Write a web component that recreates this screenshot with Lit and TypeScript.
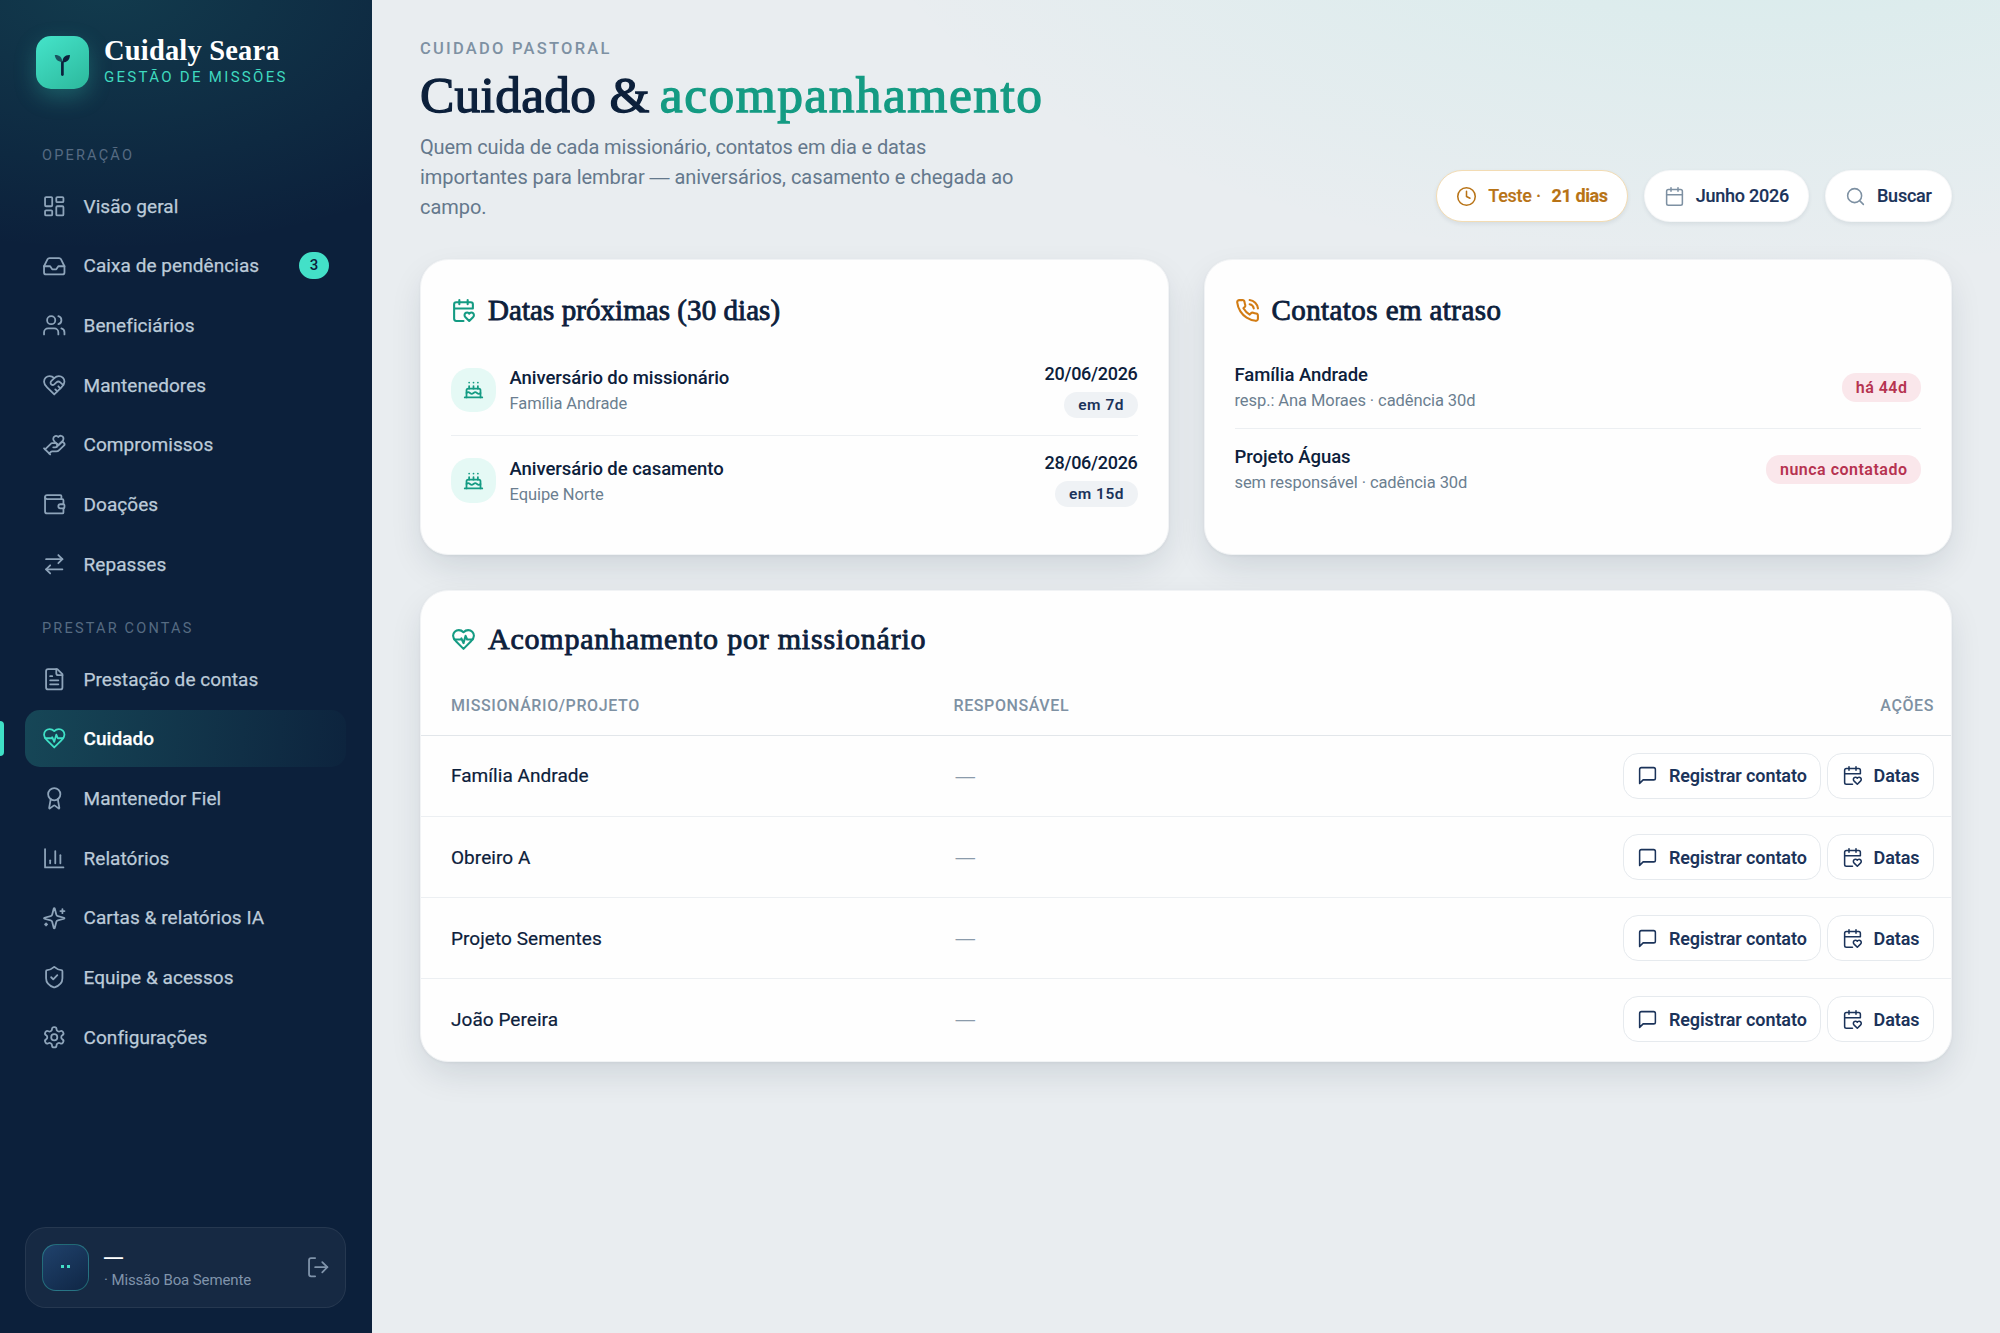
import { LitElement, html, css, svg } from "lit";
import { customElement, property } from "lit/decorators.js";
import { classMap } from "lit/directives/class-map.js";

const HEART = svg`<path d="M19 14c1.49-1.46 3-3.21 3-5.5A5.5 5.5 0 0 0 16.5 3c-1.76 0-3 .5-4.5 2-1.5-1.5-2.74-2-4.5-2A5.5 5.5 0 0 0 2 8.5c0 2.3 1.5 4.05 3 5.5l7 7Z"/>`;

const ICONS: Record<string, unknown> = {
  dashboard: svg`<rect x="3" y="3" width="7" height="9" rx="1"/><rect x="14" y="3" width="7" height="5" rx="1"/><rect x="14" y="12" width="7" height="9" rx="1"/><rect x="3" y="16" width="7" height="5" rx="1"/>`,
  inbox: svg`<path d="M22 12h-6l-2 3h-4l-2-3H2"/><path d="M5.45 5.11 2 12v6a2 2 0 0 0 2 2h16a2 2 0 0 0 2-2v-6l-3.45-6.89A2 2 0 0 0 16.76 4H7.24a2 2 0 0 0-1.79 1.11z"/>`,
  users: svg`<path d="M16 21v-2a4 4 0 0 0-4-4H6a4 4 0 0 0-4 4v2"/><circle cx="9" cy="7" r="4"/><path d="M22 21v-2a4 4 0 0 0-3-3.87"/><path d="M16 3.13a4 4 0 0 1 0 7.75"/>`,
  handshake: svg`${HEART}<path d="M12 5 9.04 7.96a2.17 2.17 0 0 0 0 3.08c.82.82 2.13.85 3 .07l2.07-1.9a2.82 2.82 0 0 1 3.79 0l2.96 2.66"/><path d="m18 15-2-2"/><path d="m15 18-2-2"/>`,
  handHeart: svg`<path d="M11 14h2a2 2 0 1 0 0-4h-3c-.6 0-1.1.2-1.4.6L3 16"/><path d="m7 20 1.6-1.4c.3-.4.8-.6 1.4-.6h4c1.1 0 2.1-.4 2.8-1.2l4.6-4.4a2 2 0 0 0-2.75-2.91l-4.2 3.9"/><path d="m2 15 6 6"/><path d="M19.5 8.5c.7-.7 1.5-1.6 1.5-2.7A2.73 2.73 0 0 0 16 4a2.78 2.78 0 0 0-5 1.8c0 1.2.8 2 1.5 2.8L16 12Z"/>`,
  wallet: svg`<path d="M19 7V4a1 1 0 0 0-1-1H5a2 2 0 0 0 0 4h15a1 1 0 0 1 1 1v4h-3a2 2 0 0 0 0 4h3a1 1 0 0 0 1-1v-2a1 1 0 0 0-1-1"/><path d="M3 5v14a2 2 0 0 0 2 2h15a1 1 0 0 0 1-1v-4"/>`,
  swap: svg`<path d="m16 3 4 4-4 4"/><path d="M20 7H4"/><path d="m8 21-4-4 4-4"/><path d="M4 17h16"/>`,
  file: svg`<path d="M15 2H6a2 2 0 0 0-2 2v16a2 2 0 0 0 2 2h12a2 2 0 0 0 2-2V7Z"/><path d="M14 2v4a2 2 0 0 0 2 2h4"/><path d="M10 9H8"/><path d="M16 13H8"/><path d="M16 17H8"/>`,
  pulse: svg`${HEART}<path d="M3.22 12H9.5l.5-1 2 4.5 2-7 1.5 3.5h5.27"/>`,
  award: svg`<path d="m15.477 12.89 1.515 8.526a.5.5 0 0 1-.81.47l-3.58-2.687a1 1 0 0 0-1.197 0l-3.586 2.686a.5.5 0 0 1-.81-.469l1.514-8.526"/><circle cx="12" cy="8" r="6"/>`,
  chart: svg`<path d="M3 3v18h18"/><path d="M18 17V9"/><path d="M13 17V5"/><path d="M8 17v-3"/>`,
  sparkles: svg`<path d="M9.937 15.5A2 2 0 0 0 8.5 14.063l-6.135-1.582a.5.5 0 0 1 0-.962L8.5 9.936A2 2 0 0 0 9.937 8.5l1.582-6.135a.5.5 0 0 1 .963 0L14.063 8.5A2 2 0 0 0 15.5 9.937l6.135 1.581a.5.5 0 0 1 0 .964L15.5 14.063a2 2 0 0 0-1.437 1.437l-1.582 6.135a.5.5 0 0 1-.963 0z"/><path d="M20 3v4"/><path d="M22 5h-4"/><path d="M4 17v2"/><path d="M5 18H3"/>`,
  shield: svg`<path d="M20 13c0 5-3.5 7.5-7.66 8.95a1 1 0 0 1-.67-.01C7.5 20.5 4 18 4 13V6a1 1 0 0 1 1-1c2 0 4.5-1.2 6.24-2.72a1.17 1.17 0 0 1 1.52 0C14.51 3.81 17 5 19 5a1 1 0 0 1 1 1z"/><path d="m9 12 2 2 4-4"/>`,
  gear: svg`<path d="M12.22 2h-.44a2 2 0 0 0-2 2v.18a2 2 0 0 1-1 1.73l-.43.25a2 2 0 0 1-2 0l-.15-.08a2 2 0 0 0-2.73.73l-.22.38a2 2 0 0 0 .73 2.73l.15.1a2 2 0 0 1 1 1.72v.51a2 2 0 0 1-1 1.74l-.15.09a2 2 0 0 0-.73 2.73l.22.38a2 2 0 0 0 2.73.73l.15-.08a2 2 0 0 1 2 0l.43.25a2 2 0 0 1 1 1.73V20a2 2 0 0 0 2 2h.44a2 2 0 0 0 2-2v-.18a2 2 0 0 1 1-1.73l.43-.25a2 2 0 0 1 2 0l.15.08a2 2 0 0 0 2.73-.73l.22-.39a2 2 0 0 0-.73-2.73l-.15-.08a2 2 0 0 1-1-1.74v-.5a2 2 0 0 1 1-1.74l.15-.09a2 2 0 0 0 .73-2.73l-.22-.38a2 2 0 0 0-2.73-.73l-.15.08a2 2 0 0 1-2 0l-.43-.25a2 2 0 0 1-1-1.73V4a2 2 0 0 0-2-2z"/><circle cx="12" cy="12" r="3"/>`,
  logout: svg`<path d="M9 21H5a2 2 0 0 1-2-2V5a2 2 0 0 1 2-2h4"/><path d="m16 17 5-5-5-5"/><path d="M21 12H9"/>`,
  clock: svg`<circle cx="12" cy="12" r="10"/><path d="M12 6v6l4 2"/>`,
  calendar: svg`<path d="M8 2v4"/><path d="M16 2v4"/><rect x="3" y="4" width="18" height="18" rx="2"/><path d="M3 10h18"/>`,
  search: svg`<circle cx="11" cy="11" r="8"/><path d="m21 21-4.3-4.3"/>`,
  calendarHeart: svg`<path d="M3 10h18V6a2 2 0 0 0-2-2H5a2 2 0 0 0-2 2v14a2 2 0 0 0 2 2h7"/><path d="M8 2v4"/><path d="M16 2v4"/><path d="M21.29 14.7a2.43 2.43 0 0 0-2.65-.52c-.3.12-.57.3-.8.53l-.34.34-.35-.34a2.43 2.43 0 0 0-2.65-.53c-.3.12-.56.3-.79.53-.95.94-1 2.53.2 3.74L17.5 22l3.6-3.55c1.2-1.21 1.14-2.8.19-3.74Z"/>`,
  phone: svg`<path d="M22 16.92v3a2 2 0 0 1-2.18 2 19.79 19.79 0 0 1-8.63-3.07 19.5 19.5 0 0 1-6-6 19.79 19.79 0 0 1-3.07-8.67A2 2 0 0 1 4.11 2h3a2 2 0 0 1 2 1.72 12.84 12.84 0 0 0 .7 2.81 2 2 0 0 1-.45 2.11L8.09 9.91a16 16 0 0 0 6 6l1.27-1.27a2 2 0 0 1 2.11-.45 12.84 12.84 0 0 0 2.81.7A2 2 0 0 1 22 16.92z"/><path d="M14.05 2a9 9 0 0 1 8 7.94"/><path d="M14.05 6A5 5 0 0 1 18 10"/>`,
  message: svg`<path d="M21 15a2 2 0 0 1-2 2H7l-4 4V5a2 2 0 0 1 2-2h14a2 2 0 0 1 2 2z"/>`,
  cake: svg`<path d="M20 21v-8a2 2 0 0 0-2-2H6a2 2 0 0 0-2 2v8"/><path d="M4 16s.5-1 2-1 2.5 2 4 2 2.5-2 4-2 2.5 2 4 2 2-1 2-1"/><path d="M2 21h20"/><path d="M7 8v3"/><path d="M12 8v3"/><path d="M17 8v3"/><path d="M7 4h.01"/><path d="M12 4h.01"/><path d="M17 4h.01"/>`,
};

@customElement("ui-icon")
class UiIcon extends LitElement {
  @property() name = "";
  @property({ type: Number }) size = 25;
  @property({ type: Number }) weight = 1.75;

  static styles = css`
    :host { display: inline-flex; flex: none; }
    .glyph { display: block; fill: none; stroke: currentColor; stroke-linecap: round; stroke-linejoin: round; }
  `;

  render() {
    return html`<svg class="glyph" width=${this.size} height=${this.size} viewBox="0 0 24 24" stroke-width=${this.weight}>${ICONS[this.name]}</svg>`;
  }
}

interface NavItem { icon: string; label: string; count?: number; active?: boolean; }

const NAV: { title: string; items: NavItem[] }[] = [
  {
    title: "OPERAÇÃO",
    items: [
      { icon: "dashboard", label: "Visão geral" },
      { icon: "inbox", label: "Caixa de pendências", count: 3 },
      { icon: "users", label: "Beneficiários" },
      { icon: "handshake", label: "Mantenedores" },
      { icon: "handHeart", label: "Compromissos" },
      { icon: "wallet", label: "Doações" },
      { icon: "swap", label: "Repasses" },
    ],
  },
  {
    title: "PRESTAR CONTAS",
    items: [
      { icon: "file", label: "Prestação de contas" },
      { icon: "pulse", label: "Cuidado", active: true },
      { icon: "award", label: "Mantenedor Fiel" },
      { icon: "chart", label: "Relatórios" },
      { icon: "sparkles", label: "Cartas & relatórios IA" },
      { icon: "shield", label: "Equipe & acessos" },
      { icon: "gear", label: "Configurações" },
    ],
  },
];

@customElement("side-bar")
class SideBar extends LitElement {
  static styles = css`
    :host {
      display: flex; flex-direction: column; box-sizing: border-box; flex: none;
      width: 372px; height: 1333px; padding: 36px 26px 25px 25px;
      background:
        radial-gradient(480px 260px at 28% -10px, rgba(47, 190, 165, 0.17), transparent 100%),
        #0c203b;
    }
    .brand { display: flex; align-items: center; gap: 15px; height: 53px; padding-left: 11px; }
    .logo {
      display: flex; width: 53px; height: 53px; border-radius: 15px;
      background: linear-gradient(145deg, #45e4ca, #2cb89c);
      box-shadow: 0 8px 22px rgba(63, 224, 198, 0.26);
    }
    .names { display: flex; flex-direction: column; margin-top: -4px; }
    .product {
      font: 700 28.5px/30px "Liberation Serif", serif; letter-spacing: 0.18px; color: #fff; white-space: nowrap;
    }
    .tagline { font-size: 15px; line-height: 18px; margin-top: 2px; letter-spacing: 2.3px; color: #3fd9bf; white-space: nowrap; }
    .section { display: flex; flex-direction: column; gap: 2.8px; }
    .section-title {
      height: 20px; line-height: 20px; margin: 57px 0 9px 17px;
      font-size: 14.5px; letter-spacing: 2.2px; color: #566b82;
    }
    .section + .section .section-title { margin: 26px 0 9px 17px; }
    .item {
      display: flex; align-items: center; gap: 17px; box-sizing: border-box; height: 56.9px;
      padding: 0 17px; border-radius: 15px; color: #8ea4ba; position: relative;
    }
    .label {
      flex: 1; font-size: 19px; letter-spacing: 0.06px; color: #bccbd9; white-space: nowrap;
      -webkit-text-stroke: 0.25px currentColor;
    }
    .item.active { background: linear-gradient(95deg, rgba(63, 224, 198, 0.2), rgba(63, 224, 198, 0.02)); color: #3fe0c6; }
    .item.active .label { color: #fff; font-weight: 500; }
    .item.active::before {
      content: ""; position: absolute; left: -25px; top: 11px; width: 4.2px; height: 35px;
      border-radius: 0 4px 4px 0; background: #3fe0c6;
    }
    .count {
      box-sizing: border-box; min-width: 30px; height: 27px; border-radius: 14px; text-align: center;
      background: #43e0c8; color: #0c203b; font-size: 15px; font-weight: 500; line-height: 27px;
    }
    .account {
      display: flex; align-items: center; box-sizing: border-box; height: 81px; margin-top: auto; padding: 0 15px 0 16px;
      border: 1.4px solid rgba(255, 255, 255, 0.07); border-radius: 21px; background: rgba(255, 255, 255, 0.045);
      color: #8094ab;
    }
    .avatar {
      display: flex; align-items: center; justify-content: center; gap: 2.5px; box-sizing: border-box;
      width: 47px; height: 47px; border-radius: 14px;
      border: 1.4px solid rgba(63, 224, 198, 0.35); background: linear-gradient(145deg, #20426c, #0f2645);
    }
    .dot { width: 3px; height: 3px; margin-top: -2px; background: #43e0c8; }
    .who { flex: 1; margin-left: 15px; }
    .user { font: 700 19px/24px "Liberation Sans", sans-serif; color: #fff; }
    .org { font-size: 15px; line-height: 22px; letter-spacing: -0.1px; white-space: nowrap; }
  `;

  render() {
    return html`
      <div class="brand">
        <div class="logo">
          <svg width="53" height="53" viewBox="0 0 53 53">
            <path d="M26.4 26.5V38.6" fill="none" stroke="#0c203b" stroke-width="2.7" stroke-linecap="round"/>
            <path d="M26.6 26.6C26.2 21.6 29.2 18.8 33.9 19.1C33.8 23.8 31.2 26.6 26.6 26.6Z" fill="#0c203b"/>
            <path d="M26.2 25.9C26.2 21.4 23.4 18.9 18.8 19.1C19.2 23.4 21.8 26 26.2 25.9Z" fill="#0c203b" opacity=".7"/>
          </svg>
        </div>
        <div class="names">
          <div class="product">Cuidaly Seara</div>
          <div class="tagline">GESTÃO DE MISSÕES</div>
        </div>
      </div>
      ${NAV.map((s) => html`
        <nav class="section">
          <div class="section-title">${s.title}</div>
          ${s.items.map((i) => html`
            <div class=${classMap({ item: true, active: !!i.active })}>
              <ui-icon name=${i.icon} size="24.5"></ui-icon>
              <span class="label">${i.label}</span>
              ${i.count ? html`<span class="count">${i.count}</span>` : ""}
            </div>`)}
        </nav>`)}
      <div class="account">
        <div class="avatar"><i class="dot"></i><i class="dot"></i></div>
        <div class="who">
          <div class="user">—</div>
          <div class="org">· Missão Boa Semente</div>
        </div>
        <ui-icon name="logout" size="24.4"></ui-icon>
      </div>
    `;
  }
}

const DATES = [
  { title: "Aniversário do missionário", who: "Família Andrade", date: "20/06/2026", left: "em 7d" },
  { title: "Aniversário de casamento", who: "Equipe Norte", date: "28/06/2026", left: "em 15d" },
];
const OVERDUE = [
  { name: "Família Andrade", note: "resp.: Ana Moraes · cadência 30d", status: "há 44d" },
  { name: "Projeto Águas", note: "sem responsável · cadência 30d", status: "nunca contatado" },
];
const MISSIONARIES = ["Família Andrade", "Obreiro A", "Projeto Sementes", "João Pereira"];

@customElement("app-root")
class AppRoot extends LitElement {
  static styles = css`
    :host {
      display: flex; width: 2000px; height: 1333px; overflow: hidden;
      font-family: Roboto, "Liberation Sans", sans-serif; color: #0c203b;
      background:
        radial-gradient(1500px 700px at 88% -12%, rgba(63, 224, 198, 0.12), transparent 62%),
        #e9edf0;
    }
    .main { display: flex; flex-direction: column; box-sizing: border-box; width: 1628px; padding: 38px 48px 0; }
    .head { display: flex; justify-content: space-between; align-items: flex-end; height: 184px; }
    .eyebrow { margin-top: 1px; font-size: 16.5px; line-height: 20px; font-weight: 500; letter-spacing: 2.25px; color: #7e91a3; }
    .title {
      margin: 6px 0 0; font: 400 51.5px/60px "Liberation Serif", serif; letter-spacing: 0.25px;
      -webkit-text-stroke: 1.3px currentColor; white-space: nowrap;
    }
    .accent { margin-left: -3px; color: #149b83; letter-spacing: 1.45px; }
    .lead { width: 640px; margin: 7px 0 0; font-size: 20px; line-height: 30px; color: #64788c; }
    .lead-line { display: block; letter-spacing: -0.05px; white-space: nowrap; }
    .lead-line.snug { letter-spacing: -0.14px; }
    .dash { font-family: "Liberation Sans", sans-serif; }
    .pills { display: flex; gap: 15.5px; }
    .pill {
      display: flex; align-items: center; gap: 10.8px; box-sizing: border-box; height: 52px; padding: 0 19.4px;
      border: 1.4px solid rgba(12, 32, 59, 0.03); border-radius: 26px; background: #fff; color: #7d90a2;
      box-shadow: 0 2px 4px rgba(12, 32, 59, 0.08);
    }
    .pill-text {
      margin-top: -2px; font-size: 18px; font-weight: 500; letter-spacing: -0.25px; color: #1b335a; white-space: pre;
      -webkit-text-stroke: 0.15px currentColor;
    }
    .pill.trial { border-color: #f3dcb4; color: #b87316; }
    .pill.trial .pill-text { color: #b87316; }
    .pill.trial .strong { font-weight: 700; letter-spacing: -0.4px; }
    .cards { display: grid; grid-template-columns: 1fr 1fr; gap: 35px; margin-top: 37px; }
    .card {
      box-sizing: border-box; border: 1.4px solid #f1f3f5; border-radius: 28px; background: #fefefe;
      box-shadow: 0 1px 3px rgba(12, 32, 59, 0.05), 0 14px 36px -6px rgba(12, 32, 59, 0.14);
    }
    .small { height: 296px; padding: 30px 30px 0; }
    .card-head { display: flex; align-items: center; gap: 12px; height: 40px; color: #149b83; }
    .card-head.warn { color: #d27c14; }
    .card-title {
      font: 400 29px/40px "Liberation Serif", serif; letter-spacing: 0.06px; color: #0c203b;
      -webkit-text-stroke: 0.85px currentColor; white-space: nowrap;
    }
    .warn .card-title { letter-spacing: 0.42px; }
    .table-card .card-title { font-size: 30px; letter-spacing: 0.78px; }
    .date-row { display: flex; align-items: center; box-sizing: border-box; height: 89.6px; }
    .dates { padding-top: 15px; }
    .date-row + .date-row { height: 91px; border-top: 1.4px solid #eceff2; }
    .date-row + .date-row .when { margin-top: -4px; }
    .round {
      display: flex; align-items: center; justify-content: center; width: 44.5px; height: 44.5px;
      border-radius: 19px; background: #e5f9f5; color: #149b83;
    }
    .grow { flex: 1; padding-top: 3px; }
    .info { flex: 1; margin-left: 14px; padding-top: 4px; }
    .name { font-size: 18.5px; line-height: 25px; font-weight: 500; letter-spacing: -0.05px; }
    .sub { font-size: 16.5px; line-height: 26px; letter-spacing: -0.08px; color: #6b7e90; }
    .when { display: flex; flex-direction: column; align-items: flex-end; margin-top: -1px; }
    .date { font-size: 18px; line-height: 25px; font-weight: 500; letter-spacing: -0.3px; }
    .tag {
      display: block; height: 26px; line-height: 27px; padding: 0 13.5px 0 14px; border-radius: 14px;
      background: #eff2f5; color: #1b335a; font-size: 15.5px; font-weight: 600; letter-spacing: 0.5px; white-space: nowrap;
    }
    .when .tag { margin-top: 6px; }
    .tag.late { height: 29px; line-height: 30px; background: #fae7eb; color: #b63350; font-size: 16px; }
    .overdue { padding-top: 17px; }
    .over-row { display: flex; align-items: center; box-sizing: border-box; height: 80.6px; }
    .over-row + .over-row { height: 82px; border-top: 1.4px solid #eceff2; }
    .table-card { height: 472px; margin-top: 34.5px; padding-top: 28.5px; }
    .table-card .card-head { padding-left: 30px; }
    .row {
      display: grid; grid-template-columns: 502.5px 1fr auto; align-items: center; box-sizing: border-box;
      height: 81.2px; padding: 0 17px 0 30px; border-top: 1.4px solid #eceff2;
    }
    .row.header {
      height: 75.8px; padding-top: 17px; border-top: 0; font-size: 16px; font-weight: 500; letter-spacing: 0.6px; color: #7e91a3;
    }
    .row.first { border-top-color: #e2e6ea; }
    .cell { font-size: 19px; letter-spacing: 0.05px; -webkit-text-stroke: 0.2px currentColor; }
    .none { padding-left: 2px; font: 400 19.5px/24px "Liberation Sans", sans-serif; color: #8b9bab; }
    .actions { display: flex; gap: 6px; }
    .btn {
      display: flex; align-items: center; gap: 10.6px; box-sizing: border-box; height: 46px; padding: 0 13.6px;
      border: 1.4px solid #e6eaee; border-radius: 15px; background: #fff; color: #1b335a;
    }
    .btn-text { font-size: 18px; font-weight: 600; letter-spacing: -0.1px; white-space: nowrap; }
  `;

  render() {
    return html`
      <side-bar></side-bar>
      <main class="main">
        <header class="head">
          <div>
            <div class="eyebrow">CUIDADO PASTORAL</div>
            <h1 class="title">Cuidado &amp; <span class="accent">acompanhamento</span></h1>
            <p class="lead">
              <span class="lead-line snug">Quem cuida de cada missionário, contatos em dia e datas</span>
              <span class="lead-line">importantes para lembrar <span class="dash">—</span> aniversários, casamento e chegada ao</span>
              <span class="lead-line">campo.</span>
            </p>
          </div>
          <div class="pills">
            <div class="pill trial"><ui-icon name="clock" size="21"></ui-icon><span class="pill-text">Teste ·</span><span class="pill-text strong">21 dias</span></div>
            <div class="pill"><ui-icon name="calendar" size="21"></ui-icon><span class="pill-text">Junho 2026</span></div>
            <div class="pill"><ui-icon name="search" size="21"></ui-icon><span class="pill-text">Buscar</span></div>
          </div>
        </header>
        <section class="cards">
          <article class="card small">
            <div class="card-head"><ui-icon name="calendarHeart" size="25" weight="2"></ui-icon><span class="card-title">Datas próximas (30 dias)</span></div>
            <div class="dates">
              ${DATES.map((d) => html`
                <div class="date-row">
                  <div class="round"><ui-icon name="cake" size="21" weight="2"></ui-icon></div>
                  <div class="info"><div class="name">${d.title}</div><div class="sub">${d.who}</div></div>
                  <div class="when"><span class="date">${d.date}</span><span class="tag">${d.left}</span></div>
                </div>`)}
            </div>
          </article>
          <article class="card small">
            <div class="card-head warn"><ui-icon name="phone" size="25" weight="2"></ui-icon><span class="card-title">Contatos em atraso</span></div>
            <div class="overdue">
              ${OVERDUE.map((o) => html`
                <div class="over-row">
                  <div class="grow"><div class="name">${o.name}</div><div class="sub">${o.note}</div></div>
                  <span class="tag late">${o.status}</span>
                </div>`)}
            </div>
          </article>
        </section>
        <section class="card table-card">
          <div class="card-head"><ui-icon name="pulse" size="25" weight="2"></ui-icon><span class="card-title">Acompanhamento por missionário</span></div>
          <div class="row header"><span>MISSIONÁRIO/PROJETO</span><span>RESPONSÁVEL</span><span>AÇÕES</span></div>
          ${MISSIONARIES.map((m, i) => html`
            <div class=${classMap({ row: true, first: i === 0 })}>
              <span class="cell">${m}</span>
              <span class="none">—</span>
              <div class="actions">
                <div class="btn"><ui-icon name="message" size="21"></ui-icon><span class="btn-text">Registrar contato</span></div>
                <div class="btn"><ui-icon name="calendarHeart" size="21"></ui-icon><span class="btn-text">Datas</span></div>
              </div>
            </div>`)}
        </section>
      </main>
    `;
  }
}
